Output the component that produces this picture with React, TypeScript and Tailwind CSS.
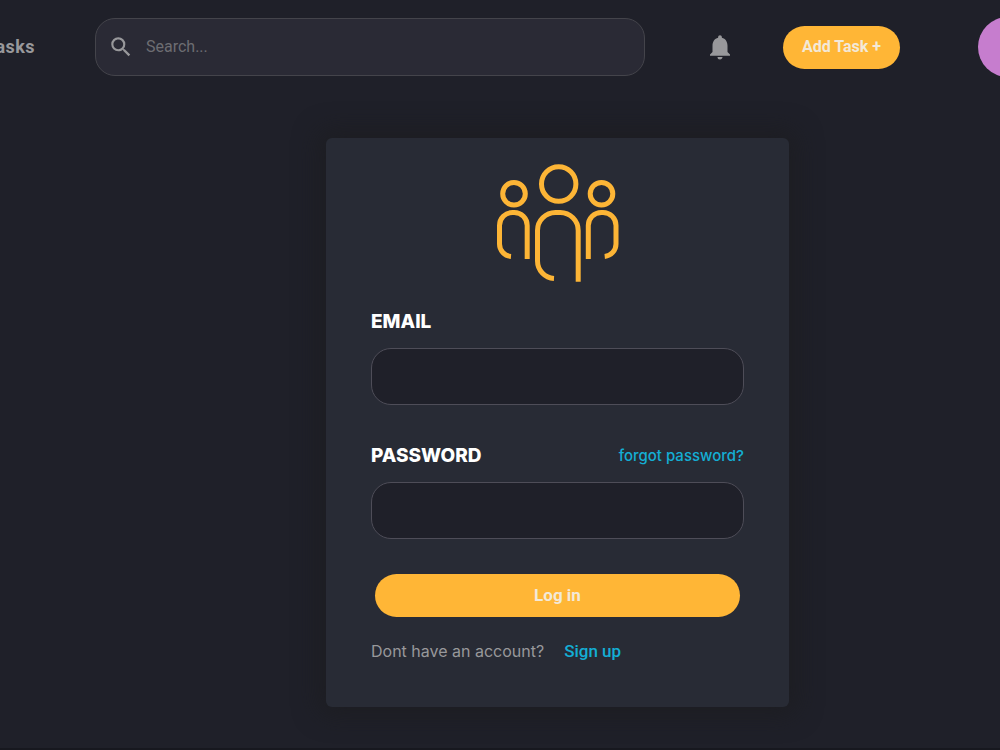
import { MdNotifications, MdSearch } from "react-icons/md";

function TeamLogo() {
  return (
    <svg
      viewBox="16 13 124 120"
      className="h-[120px] w-[124px]"
      fill="none"
      stroke="#fdb536"
      strokeWidth="5"
      aria-hidden="true"
    >
      <circle cx="78.7" cy="34" r="17.2" />
      <circle cx="34" cy="43.8" r="11.3" />
      <circle cx="121.5" cy="43.8" r="11.3" />
      <path d="M47.2 109V75.5a13 13 0 0 0-13-13h-1.7a13 13 0 0 0-13 13V94a12.5 12.5 0 0 0 11.5 12.4" />
      <path d="M108.3 109V75.5a13 13 0 0 1 13-13h1.7a13 13 0 0 1 13 13V94a12.5 12.5 0 0 1-11.3 12.4" />
      <path d="M98.2 131.8V80.5a18 18 0 0 0-18-18h-4.7a18 18 0 0 0-18 18V111a17.5 17.5 0 0 0 16.5 17.4" />
    </svg>
  );
}

function Header() {
  return (
    <header className="flex items-center overflow-hidden pt-[17px] font-['Roboto',sans-serif]">
      <div className="flex w-[35px] shrink-0 justify-end">
        <a href="#tasks" className="text-lg font-bold tracking-wide text-[#98989b]">
          Tasks
        </a>
      </div>
      <label className="ml-[60px] flex h-[58px] min-w-0 flex-1 items-center gap-3 rounded-[20px] border border-[#44444b] bg-[#2a2a35] px-3">
        <MdSearch className="size-[26px] shrink-0 text-[#98989b]" aria-hidden="true" />
        <input
          type="search"
          aria-label="Search"
          placeholder="Search..."
          className="min-w-0 flex-1 bg-transparent text-base text-white outline-none placeholder:text-[#6d6d72]"
        />
      </label>
      <button type="button" aria-label="Notifications" className="ml-[60px] shrink-0 text-[#98989b]">
        <MdNotifications className="size-[30px]" />
      </button>
      <button
        type="button"
        className="ml-12 h-[43px] shrink-0 rounded-full bg-[#ffb636] px-[19px] text-base font-bold text-[#f3e9d8]"
      >
        Add Task +
      </button>
      <div className="ml-[78px] flex w-[22px] shrink-0">
        <div className="size-[60px] shrink-0 rounded-full bg-[#c67dce]" />
      </div>
    </header>
  );
}

const fieldClass =
  "h-[57px] w-full rounded-[20px] border border-[#4e4d58] bg-[#1f2029] px-4 text-white outline-none";
const labelClass = "text-[19px] leading-6 font-extrabold text-white";

export default function App() {
  return (
    <div className="min-h-screen border-b-2 border-[#17181f] bg-[#1f2029] font-['Inter',sans-serif]">
      <Header />
      <main className="flex justify-center pt-[61px] pl-[115px]">
        <form className="flex w-full max-w-[463px] flex-col rounded-md bg-[#282b35] px-[45px] pt-[25px] pb-11 shadow-[0_0_24px_8px_rgba(28,28,32,0.7)]">
          <div className="flex justify-center">
            <TeamLogo />
          </div>

          <div className="mt-[27px] flex items-center">
            <label htmlFor="email" className={labelClass}>
              EMAIL
            </label>
          </div>
          <input id="email" type="email" className={`mt-[14px] ${fieldClass}`} />

          <div className="mt-[39px] flex items-center justify-between">
            <label htmlFor="password" className={labelClass}>
              PASSWORD
            </label>
            <a href="#forgot" className="text-[15px] leading-6 font-medium text-[#14aed4]">
              forgot password?
            </a>
          </div>
          <input id="password" type="password" className={`mt-[14px] ${fieldClass}`} />

          <button
            type="submit"
            className="mx-1 mt-[35px] h-[43px] rounded-full bg-[#ffb636] font-['Roboto',sans-serif] text-[17px] font-bold text-[#f3e9d8]"
          >
            Log in
          </button>

          <p className="mt-[22px] flex items-center gap-5 leading-6">
            <span className="text-base text-[#98989b]">Dont have an account?</span>
            <a href="#signup" className="font-['Roboto',sans-serif] text-[17px] font-medium text-[#14aed4]">
              Sign up
            </a>
          </p>
        </form>
      </main>
    </div>
  );
}
